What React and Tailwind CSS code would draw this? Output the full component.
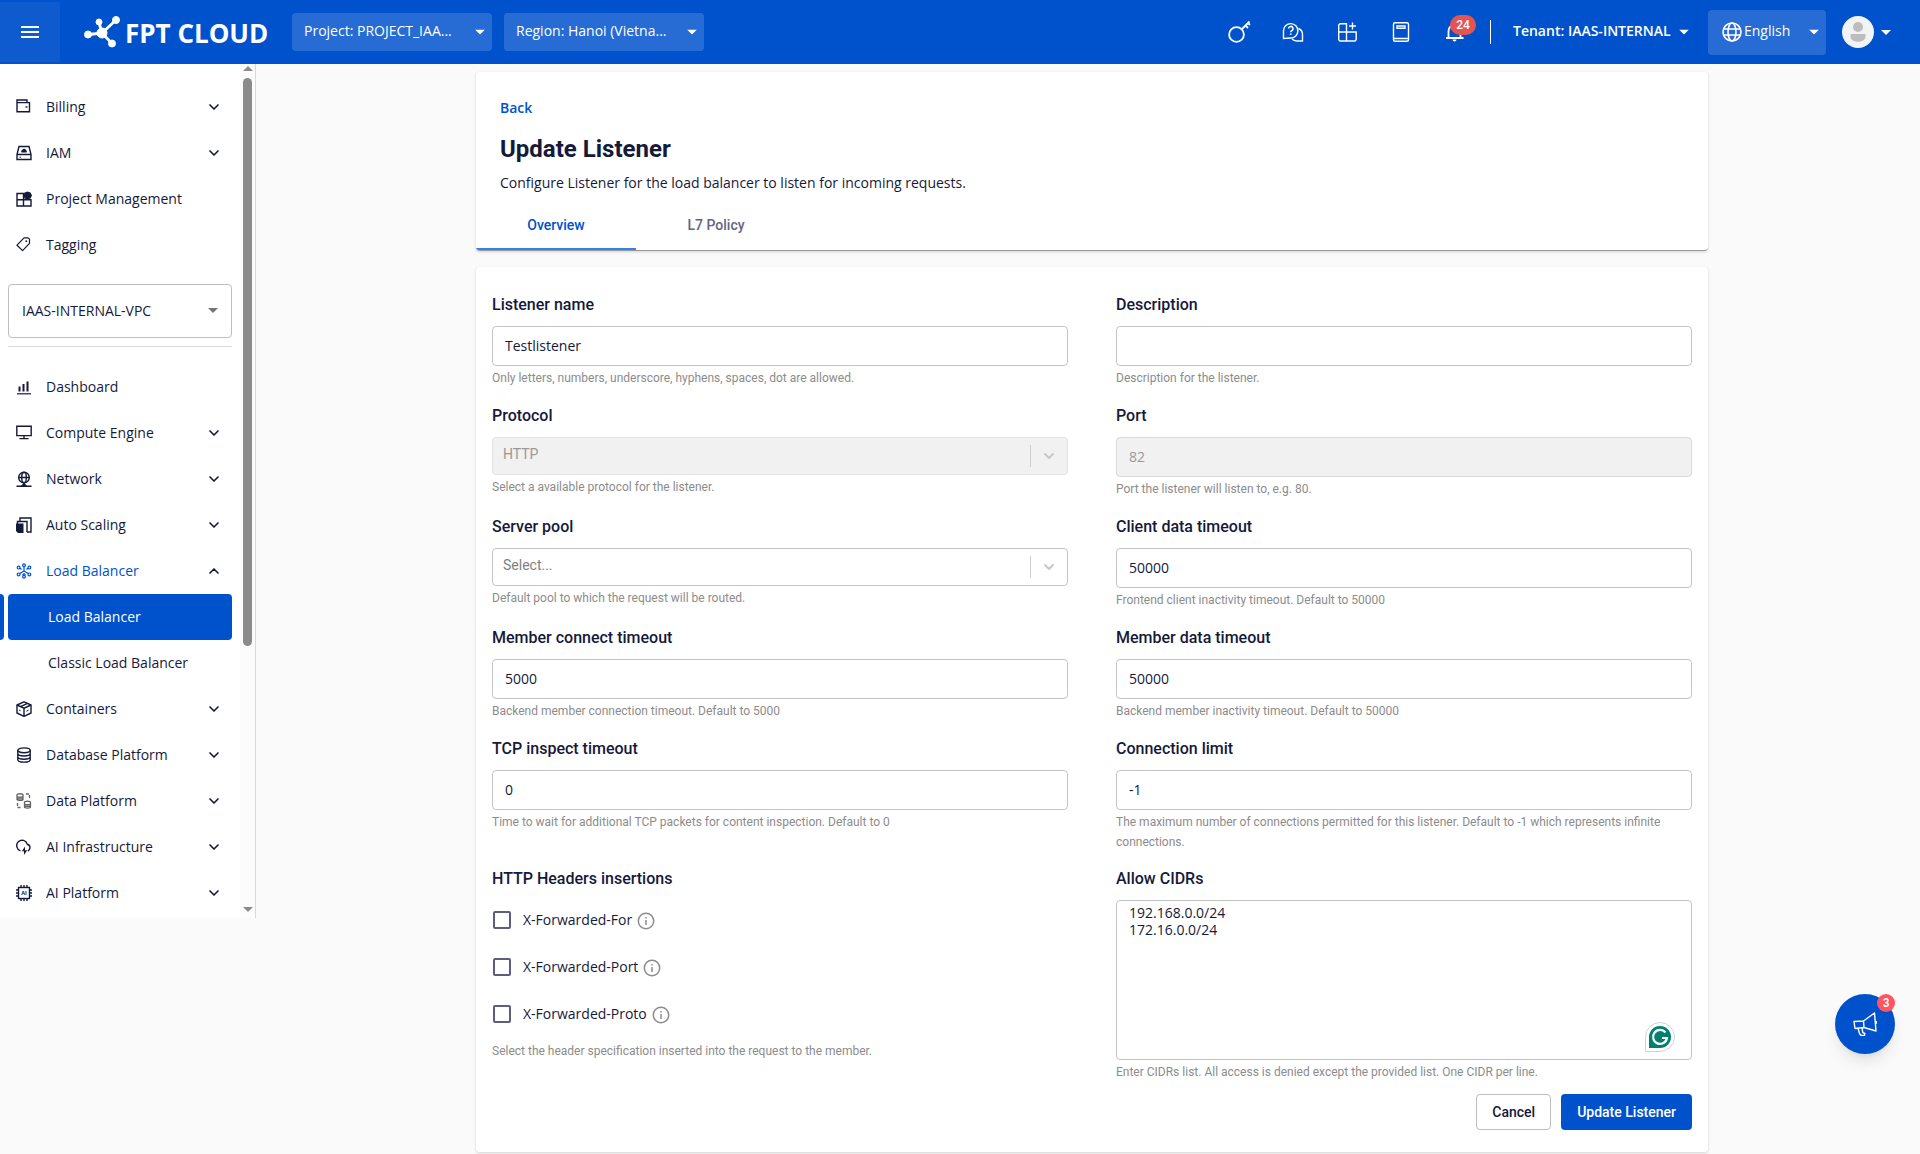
import React, { useState } from "react";
import { ChevronDown, ChevronUp } from "lucide-react";

const Caret = ({ className }) => (
  <svg viewBox="0 0 10 5" className={`h-[5px] w-[10px] ${className}`} fill="currentColor" aria-hidden="true">
    <path d="M0 0h10L5 5z" />
  </svg>
);

// 16px sidebar icons, drawn with the current text colour
const icons = {
  billing: (
    <>
      <path d="M1 12.700V1h10v2.600M1 3.600h12.500v9.100H1z" />
      <path d="M9.500 8h2" />
    </>
  ),
  iam: (
    <>
      <path d="M1 9.500 3 1.500h10l2 8v5H1zM1 9.500h14" />
      <path d="M3.500 12.200h1.500" strokeWidth="1" />
      <path d="M5.500 7.500a1.500 1.500 0 0 1 .8-2.400 1.900 1.900 0 0 1 3.600 0 1.500 1.500 0 0 1 .6 2.400z" fill="currentColor" stroke="none" />
    </>
  ),
  project: (
    <>
      <path d="M1 15V2.500h6.500V15zM1 8.800h14V15H7.500M7.500 8.500V15" />
      <path d="M11.500.5l3 1 1.500 3-1.500 3-3 1-3-1-1-3 1-3z" fill="currentColor" stroke="none" />
    </>
  ),
  tag: (
    <>
      <path d="M8 .8h4.200l1.300 1.300v4.200L6.600 13.600 1 8.200z" strokeWidth="1.200" strokeLinejoin="round" />
      <circle cx="10.300" cy="4.200" r="0.900" fill="currentColor" stroke="none" />
    </>
  ),
  dashboard: (
    <>
      <path d="M3.500 12.500V7.500M7.500 12.500V5M11.500 12.500V2.500" strokeWidth="2" />
      <path d="M1 14.800h14" strokeWidth="1.200" />
    </>
  ),
  compute: <path d="M.8 1.200h14.400v9.400H.8zM8 10.600V13.600M3.500 13.600h9" />,
  network: (
    <>
      <circle cx="8" cy="6.500" r="5.300" />
      <ellipse cx="8" cy="6.500" rx="2.300" ry="5.300" />
      <path d="M2.700 6.500h10.600M8 12v3M.5 15.200h15M5.500 15l2.500-2 2.500 2" />
    </>
  ),
  scaling: (
    <>
      <path d="M4 4V1h11v14h-4M1.500 7V4.500h9.500V15" />
      <path d="M0 6.500h7.500V16H2l-2-2z" fill="currentColor" stroke="none" />
    </>
  ),
  balancer: (
    <g strokeWidth="1.200">
      <circle cx="8" cy="2.300" r="1.400" />
      <circle cx="8" cy="13.700" r="1.400" />
      <circle cx="2.600" cy="4.600" r="1.400" />
      <circle cx="13.400" cy="4.600" r="1.400" />
      <circle cx="2.600" cy="11.400" r="1.400" />
      <circle cx="13.400" cy="11.400" r="1.400" />
      <path d="M8 3.700V8M8 8l-4.200 2.600M8 8l4.200 2.600M6.500 11.800 8 10.800l1.500 1M4 5.200l1.600 1.300M12 5.200l-1.600 1.300" />
    </g>
  ),
  containers: (
    <>
      <path d="M8 .8 15 4v8l-7 3.300L1 12V4z" strokeLinejoin="round" />
      <path d="M1 4l7 3.200L15 4M8 7.200v8M4.500 5.600l7-3.200" />
      <path d="M3 9l1.500.7M10.500 10.200l2-1" strokeWidth="1" />
    </>
  ),
  database: (
    <>
      <ellipse cx="8" cy="3.300" rx="6.200" ry="2.400" />
      <path d="M1.800 3.300v9.400c0 1.300 2.800 2.400 6.200 2.400s6.200-1.100 6.200-2.400V3.300M1.800 6.600C1.800 8 4.600 9 8 9s6.200-1 6.200-2.400M1.800 9.800c0 1.300 2.800 2.400 6.200 2.400s6.200-1.100 6.200-2.400" />
    </>
  ),
  data: (
    <g stroke="#666" strokeWidth="1.300">
      <path d="M1 1.800C1 .4 7 .4 7 1.800v4.600C7 7.800 1 7.800 1 6.400zM1 3.500c1 1 5 1 6 0M1 5.200c1 1 5 1 6 0" />
      <path d="M8.500 9.300c0-1.400 6-1.400 6 0v4.700c0 1.400-6 1.400-6 0zM8.500 11c1 1 5 1 6 0M8.500 12.700c1 1 5 1 6 0" />
      <path d="M10 1h3.500v4M1.500 10v4.500H5" strokeDasharray="3 1.500" />
    </g>
  ),
  cloud: (
    <>
      <path d="M4.500 11.800A5.400 5.400 0 1 1 11.300 5.200A3.600 3.600 0 0 1 11.800 12" />
      <path d="M9 7.500l-3.200 4.700h2.200V16l3.200-4.700H9z" fill="currentColor" stroke="none" />
    </>
  ),
  ai: (
    <>
      <rect x="2.500" y="2.500" width="11" height="11" />
      <path d="M5 0v2.500M8 0v2.500M11 0v2.500M5 13.500V16M8 13.500V16M11 13.500V16M0 5h2.500M0 8h2.500M0 11h2.500M13.500 5H16M13.500 8H16M13.500 11H16" />
      <text x="8" y="10" fontSize="5.500" fontWeight="700" textAnchor="middle" fill="currentColor" stroke="none">AI</text>
    </>
  ),
};

const MenuIcon = ({ name }) => (
  <svg viewBox="0 0 16 16" className="h-4 w-4 shrink-0" fill="none" stroke="currentColor" strokeWidth="1.400" aria-hidden="true">
    {icons[name]}
  </svg>
);

const topMenu = [
  { label: "Billing", icon: "billing", expandable: true },
  { label: "IAM", icon: "iam", expandable: true },
  { label: "Project Management", icon: "project" },
  { label: "Tagging", icon: "tag" },
];

const serviceMenu = [
  { label: "Dashboard", icon: "dashboard" },
  { label: "Compute Engine", icon: "compute", expandable: true },
  { label: "Network", icon: "network", expandable: true },
  { label: "Auto Scaling", icon: "scaling", expandable: true },
  {
    label: "Load Balancer",
    icon: "balancer",
    expandable: true,
    children: ["Load Balancer", "Classic Load Balancer"],
  },
  { label: "Containers", icon: "containers", expandable: true },
  { label: "Database Platform", icon: "database", expandable: true },
  { label: "Data Platform", icon: "data", expandable: true },
  { label: "AI Infrastructure", icon: "cloud", expandable: true },
  { label: "AI Platform", icon: "ai", expandable: true },
];

const MenuItem = ({ item }) => {
  if (!item.expandable) {
    return (
      <li>
        <a href="#" className="flex h-[46px] items-center gap-[14px] px-4">
          <MenuIcon name={item.icon} />
          {item.label}
        </a>
      </li>
    );
  }

  const open = Boolean(item.children);
  const Chevron = open ? ChevronUp : ChevronDown;

  return (
    <li>
      <button
        type="button"
        aria-expanded={open}
        className="flex h-[46px] w-full items-center gap-[14px] pr-[18px] pl-4 text-left"
      >
        <span className={open ? "text-[#0052cc]" : ""}>
          <MenuIcon name={item.icon} />
        </span>
        <span className={open ? "flex-1 text-[#0052cc]" : "flex-1"}>{item.label}</span>
        <Chevron className="h-4 w-4" strokeWidth={2.5} />
      </button>
      {open && (
        <ul>
          {item.children.map((child, index) =>
            index === 0 ? (
              <li key={child} className="flex gap-1 pr-2">
                <span className="w-1 rounded-r bg-[#0052cc]" />
                <a
                  href="#"
                  aria-current="page"
                  className="flex h-[46px] flex-1 items-center rounded bg-[#0052cc] pl-10 text-white"
                >
                  {child}
                </a>
              </li>
            ) : (
              <li key={child}>
                <a href="#" className="flex h-[46px] items-center pl-12">
                  {child}
                </a>
              </li>
            )
          )}
        </ul>
      )}
    </li>
  );
};

const Sidebar = () => (
  <aside className="flex w-64 shrink-0 self-start border-r border-[#d9d9d9] bg-white">
    <nav className="flex-1 pt-5 pb-0.5">
      <ul>
        {topMenu.map((item) => (
          <MenuItem key={item.label} item={item} />
        ))}
      </ul>
      <div className="mx-2 mt-4 border-b border-[#dcdce0] pb-2">
        <div className="relative">
          <select
            aria-label="VPC"
            className="h-[54px] w-full appearance-none rounded border border-[#bdbdbd] bg-white px-[13px]"
          >
            <option>IAAS-INTERNAL-VPC</option>
          </select>
          <Caret className="pointer-events-none absolute top-6 right-[14px] text-[#757575]" />
        </div>
      </div>
      <ul className="mt-[17px]">
        {serviceMenu.map((item) => (
          <MenuItem key={item.label} item={item} />
        ))}
      </ul>
    </nav>
    <div className="flex w-[15px] flex-col items-center bg-[#fcfcfc] pt-0.5 pb-1.5" aria-hidden="true">
      <Caret className="mb-[7px] rotate-180 text-[#8b8b8b]" />
      <div className="h-[568px] w-[9px] rounded-full bg-[#8b8b8b]" />
      <Caret className="mt-auto text-[#8b8b8b]" />
    </div>
  </aside>
);

const HeaderSelect = ({ label, value, className }) => (
  <div className="relative">
    <select aria-label={label} className={`appearance-none rounded bg-[#266cd4] pb-0.5 text-white ${className}`}>
      <option>{value}</option>
    </select>
    <Caret className="pointer-events-none absolute top-1/2 right-[7px] -translate-y-1/2 text-white" />
  </div>
);

const Logo = () => (
  <a href="#" aria-label="FPT Cloud" className="ml-6 flex w-[180px] items-center gap-1 text-white">
    <svg viewBox="0 0 37 32" className="h-8 w-[37px] shrink-0" fill="currentColor" stroke="currentColor" aria-hidden="true">
      <path d="M5 18.500 18 17M15 6.500 18 17M32 4 18 17M28 27.500 18 17" strokeWidth="2.800" fill="none" />
      <circle cx="4" cy="18.500" r="3.500" />
      <circle cx="15" cy="6" r="3" />
      <circle cx="32" cy="4" r="3.500" />
      <circle cx="28" cy="27.500" r="3.500" />
      <circle cx="18" cy="17" r="5" />
    </svg>
    <span className="pt-0.5 text-[26px] leading-8 font-bold whitespace-nowrap">FPT CLOUD</span>
  </a>
);

const HeaderIcon = ({ label, children }) => (
  <button type="button" aria-label={label} className="relative h-6 w-6">
    <svg viewBox="0 0 24 24" className="h-6 w-6" fill="none" stroke="currentColor" strokeWidth="1.400" aria-hidden="true">
      {children}
    </svg>
    {label === "Notifications" && (
      <span className="absolute -top-[5px] left-[7px] flex h-5 w-[26px] items-center justify-center rounded-full bg-[#e55353] font-[Roboto] text-xs font-medium">
        24
      </span>
    )}
  </button>
);

const Header = () => (
  <header className="flex h-16 items-center bg-[#0052cc] pr-[29px] text-white">
    <button
      type="button"
      aria-label="Toggle menu"
      className="flex h-[60px] w-[60px] shrink-0 flex-col items-center justify-center gap-[3px] bg-white/5"
    >
      <span className="h-0.5 w-[18px] bg-white" />
      <span className="h-0.5 w-[18px] bg-white" />
      <span className="h-0.5 w-[18px] bg-white" />
    </button>
    <Logo />
    <div className="ml-7 flex gap-3">
      <HeaderSelect label="Project" value="Project: PROJECT_IAA..." className="h-[38px] w-[200px] px-3" />
      <HeaderSelect label="Region" value="Region: Hanoi (Vietna..." className="h-[38px] w-[200px] px-3" />
    </div>

    <div className="ml-auto flex items-center">
      <div className="flex gap-[30px]">
        <HeaderIcon label="Access keys">
          <circle cx="9.500" cy="14.500" r="7.400" strokeWidth="1.800" />
          <path d="M15 9l7.500-7.500M18.500 5.500l2.500 2.500M21 3l2 2" strokeWidth="1.800" />
        </HeaderIcon>
        <HeaderIcon label="Support">
          <path d="M2.500 18.500v-8a7.200 7.200 0 1 1 7.200 7.500z" />
          <path d="M17.500 8.500a6.500 6.500 0 0 1 4 6v6.500h-6a6.500 6.500 0 0 1-4.500-2" />
          <path d="M7.600 8.600a2.200 2.200 0 1 1 3.200 2c-.8.4-1.100.8-1.100 1.700M9.700 13.600v1.400" strokeWidth="1.600" />
        </HeaderIcon>
        <HeaderIcon label="Services">
          <path d="M11.500 12V3.700H5L3.700 5v14.700L5 21h15l1.200-1.300V12H3.700M11.500 12v9M17.500 2.500v7M14 6h7" />
        </HeaderIcon>
        <HeaderIcon label="Documents">
          <rect x="4.500" y="2.700" width="15" height="18.500" rx="1.500" />
          <path d="M4.500 18.500h15M8 6h8v2.200H8z" />
        </HeaderIcon>
        <HeaderIcon label="Notifications">
          <path d="M3 18h17.500M5.500 18v-7a6 6 0 0 1 12 0v7" strokeWidth="1.800" />
          <path d="M9.500 19.500h4a2 2 0 0 1-4 0z" fill="currentColor" stroke="none" />
        </HeaderIcon>
      </div>
      <span className="ml-[23px] h-6 w-px bg-white" />
      <div className="relative ml-[22px]">
        <select aria-label="Tenant" className="appearance-none pr-[18px] pb-0.5 font-semibold">
          <option>Tenant: IAAS-INTERNAL</option>
        </select>
        <Caret className="pointer-events-none absolute top-1/2 right-0 -translate-y-1/2" />
      </div>
      <div className="relative ml-[19px]">
        <svg
          viewBox="0 0 20 20"
          className="pointer-events-none absolute top-3 left-[14px] z-10 h-5 w-5"
          fill="none"
          stroke="currentColor"
          strokeWidth="1.600"
          aria-hidden="true"
        >
          <circle cx="10" cy="10" r="9" />
          <ellipse cx="10" cy="10" rx="4" ry="9" />
          <path d="M1.500 7h17M1.500 13h17" />
        </svg>
        <HeaderSelect label="Language" value="English" className="h-[45px] w-[118px] pl-9" />
      </div>
      <button type="button" aria-label="Account" className="ml-4 flex items-center gap-[7px]">
        <svg viewBox="0 0 32 32" className="h-8 w-8" aria-hidden="true">
          <circle cx="16" cy="16" r="16" fill="#f2f3f5" />
          <circle cx="16" cy="11" r="5" fill="#bdbdbd" />
          <path d="M8.500 18h15v2.500c0 7-15 7-15 0z" fill="#bdbdbd" />
        </svg>
        <Caret />
      </button>
    </div>
  </header>
);

const fieldBase = "w-full rounded border px-3 disabled:border-[#d9d9d9] disabled:bg-[#f1f1f1] disabled:text-[#999]";

const Field = ({ id, label, help, children }) => (
  <div className="font-[Roboto]">
    <label htmlFor={id} className="mb-[10px] block text-base leading-[22px] font-medium">
      {label}
    </label>
    {children}
    <p className="mt-0.5 text-xs leading-5 text-[#8c8c8c]">{help}</p>
  </div>
);

const TextField = ({ id, label, help, value, disabled }) => (
  <Field id={id} label={label} help={help}>
    <input
      id={id}
      type="text"
      defaultValue={value}
      disabled={disabled}
      className={`block h-10 border-[#c4c4c4] pb-0.5 font-['Open_Sans'] ${fieldBase}`}
    />
  </Field>
);

const SelectField = ({ id, label, help, value, disabled }) => (
  <Field id={id} label={label} help={help}>
    <div className="relative">
      <select
        id={id}
        disabled={disabled}
        className="block h-[38px] w-full appearance-none rounded border border-[#c4c4c4] px-[10px] pb-1 text-[#808080] disabled:border-[#e3e3e3] disabled:bg-[#f1f1f1] disabled:text-[#999] disabled:opacity-100"
      >
        <option>{value}</option>
      </select>
      <span className="pointer-events-none absolute inset-y-2 right-px flex items-center border-l border-[#d0d0d0] px-[10px] text-[#c8c8c8]">
        <ChevronDown className="h-4 w-4" strokeWidth={3} />
      </span>
    </div>
  </Field>
);

const InfoIcon = () => (
  <svg viewBox="0 0 18 18" className="mt-0.5 h-[18px] w-[18px]" fill="none" stroke="#8c8c8c" strokeWidth="1.500" aria-hidden="true">
    <circle cx="9" cy="9" r="7.700" />
    <path d="M9 8v5M9 5v1.500" />
  </svg>
);

const forwardHeaders = ["X-Forwarded-For", "X-Forwarded-Port", "X-Forwarded-Proto"];

const ListenerForm = () => {
  const [selected, setSelected] = useState([]);

  const toggleHeader = (name) => {
    setSelected((current) =>
      current.includes(name) ? current.filter((item) => item !== name) : [...current, name]
    );
  };

  return (
    <form
      className="mt-4 rounded bg-white px-4 pt-[27px] pb-[22px] shadow-[0_1px_3px_rgba(0,0,0,0.16)]"
      onSubmit={(e) => e.preventDefault()}
    >
      <div className="grid grid-cols-2 gap-x-12 gap-y-[17px]">
        <TextField
          id="name"
          label="Listener name"
          value="Testlistener"
          help="Only letters, numbers, underscore, hyphens, spaces, dot are allowed."
        />
        <TextField id="description" label="Description" value="" help="Description for the listener." />
        <SelectField
          id="protocol"
          label="Protocol"
          value="HTTP"
          help="Select a available protocol for the listener."
          disabled
        />
        <TextField id="port" label="Port" value="82" help="Port the listener will listen to, e.g. 80." disabled />
        <SelectField
          id="pool"
          label="Server pool"
          value="Select..."
          help="Default pool to which the request will be routed."
        />
        <TextField
          id="clientTimeout"
          label="Client data timeout"
          value="50000"
          help="Frontend client inactivity timeout. Default to 50000"
        />
        <TextField
          id="connectTimeout"
          label="Member connect timeout"
          value="5000"
          help="Backend member connection timeout. Default to 5000"
        />
        <TextField
          id="memberTimeout"
          label="Member data timeout"
          value="50000"
          help="Backend member inactivity timeout. Default to 50000"
        />
        <TextField
          id="tcpTimeout"
          label="TCP inspect timeout"
          value="0"
          help="Time to wait for additional TCP packets for content inspection. Default to 0"
        />
        <TextField
          id="limit"
          label="Connection limit"
          value="-1"
          help="The maximum number of connections permitted for this listener. Default to -1 which represents infinite connections."
        />
      </div>

      <div className="mt-4 grid grid-cols-2 gap-x-12">
        <fieldset>
          <legend className="font-[Roboto] text-base leading-[22px] font-medium">HTTP Headers insertions</legend>
          <div className="mt-1.5">
            {forwardHeaders.map((name) => (
              <label key={name} className="flex h-[47px] w-fit items-center gap-[5px]">
                <input
                  type="checkbox"
                  checked={selected.includes(name)}
                  onChange={() => toggleHeader(name)}
                  className="mr-[7px] ml-px h-[18px] w-[18px] appearance-none rounded-xs border-2 border-[#5a5f82] checked:bg-[#0052cc]"
                />
                {name}
                <InfoIcon />
              </label>
            ))}
          </div>
          <p className="mt-1 font-[Roboto] text-xs leading-5 text-[#8c8c8c]">
            Select the header specification inserted into the request to the member.
          </p>
        </fieldset>

        <Field
          id="cidrs"
          label="Allow CIDRs"
          help="Enter CIDRs list. All access is denied except the provided list. One CIDR per line."
        >
          <div className="relative">
            <textarea
              id="cidrs"
              defaultValue={"192.168.0.0/24\n172.16.0.0/24"}
              className={`block h-40 resize-none border-[#c4c4c4] py-[3px] font-['Open_Sans'] leading-[17px] ${fieldBase}`}
            />
            <svg viewBox="0 0 30 30" className="absolute right-[17px] bottom-2 h-[30px] w-[30px]" aria-hidden="true">
              <path d="M.5 29.500V15A14.500 14.500 0 1 1 15 29.500z" fill="#fff" stroke="#cfd3e0" />
              <path d="M4 26V15a11 11 0 1 1 11 11z" fill="#00806e" />
              <path d="M20.500 10.500a7 7 0 1 0 1.500 5.500h-5" fill="none" stroke="#fff" strokeWidth="2.200" />
            </svg>
          </div>
        </Field>
      </div>

      <div className="mt-3 flex justify-end gap-[10px] font-[Roboto] font-medium">
        <button type="button" className="h-9 rounded border border-[#bdbdbd] bg-white px-[15px]">
          Cancel
        </button>
        <button type="submit" className="h-9 rounded bg-[#0052cc] px-4 text-white">
          Update Listener
        </button>
      </div>
    </form>
  );
};

const tabClass = "h-12 w-40 border-b-2";

const App = () => (
  <div className="min-h-screen bg-[#fafafa] font-['Open_Sans',sans-serif] text-sm text-[#15193a]">
    <Header />
    <div className="flex">
      <Sidebar />
      <main className="min-w-0 flex-1 pt-2 pl-2">
        <div className="mx-auto max-w-[1232px]">
          <section className="overflow-hidden rounded border-b border-[#999] bg-white pt-[26px] shadow-[0_1px_3px_rgba(0,0,0,0.16)]">
            <div className="px-6">
              <a href="#" className="block w-fit leading-5 font-semibold text-[#0052cc]">
                Back
              </a>
              <h1 className="mt-[15px] font-[Roboto] text-2xl leading-8 font-bold">Update Listener</h1>
              <p className="mt-2 leading-5">
                Configure Listener for the load balancer to listen for incoming requests.
              </p>
            </div>
            <div role="tablist" className="mt-[9px] flex font-[Roboto] font-medium">
              <button
                type="button"
                role="tab"
                aria-selected="true"
                className={`border-[#2f7fec] text-[#0052cc] ${tabClass}`}
              >
                Overview
              </button>
              <button
                type="button"
                role="tab"
                aria-selected="false"
                className={`border-transparent text-[#63667f] ${tabClass}`}
              >
                L7 Policy
              </button>
            </div>
          </section>
          <ListenerForm />
        </div>
      </main>
    </div>

    <button
      type="button"
      aria-label="Announcements"
      className="fixed right-[25px] bottom-[100px] flex h-[60px] w-[60px] items-center justify-center rounded-full bg-[#0052cc] text-white shadow-lg"
    >
      <svg
        viewBox="0 0 24 24"
        className="h-6 w-6"
        fill="none"
        stroke="currentColor"
        strokeWidth="1.400"
        strokeLinejoin="round"
        aria-hidden="true"
      >
        <path d="M10.500 9 21.500 1l1.500 18-12-3.500zM1 9.500 10.500 9l.5 6.500-9 1zM22.200 9l1.300.8v1.400l-1.200.6" />
        <path d="M5 16.200 6.500 21.500l1.500 2h3.500l.3-2-2-.8L9 15.800" />
      </svg>
      <span className="absolute top-0 right-0 flex h-[18px] w-[18px] items-center justify-center rounded-full bg-[#ff5560] font-['Liberation_Sans'] text-xs font-bold">
        3
      </span>
    </button>
  </div>
);

export default App;
